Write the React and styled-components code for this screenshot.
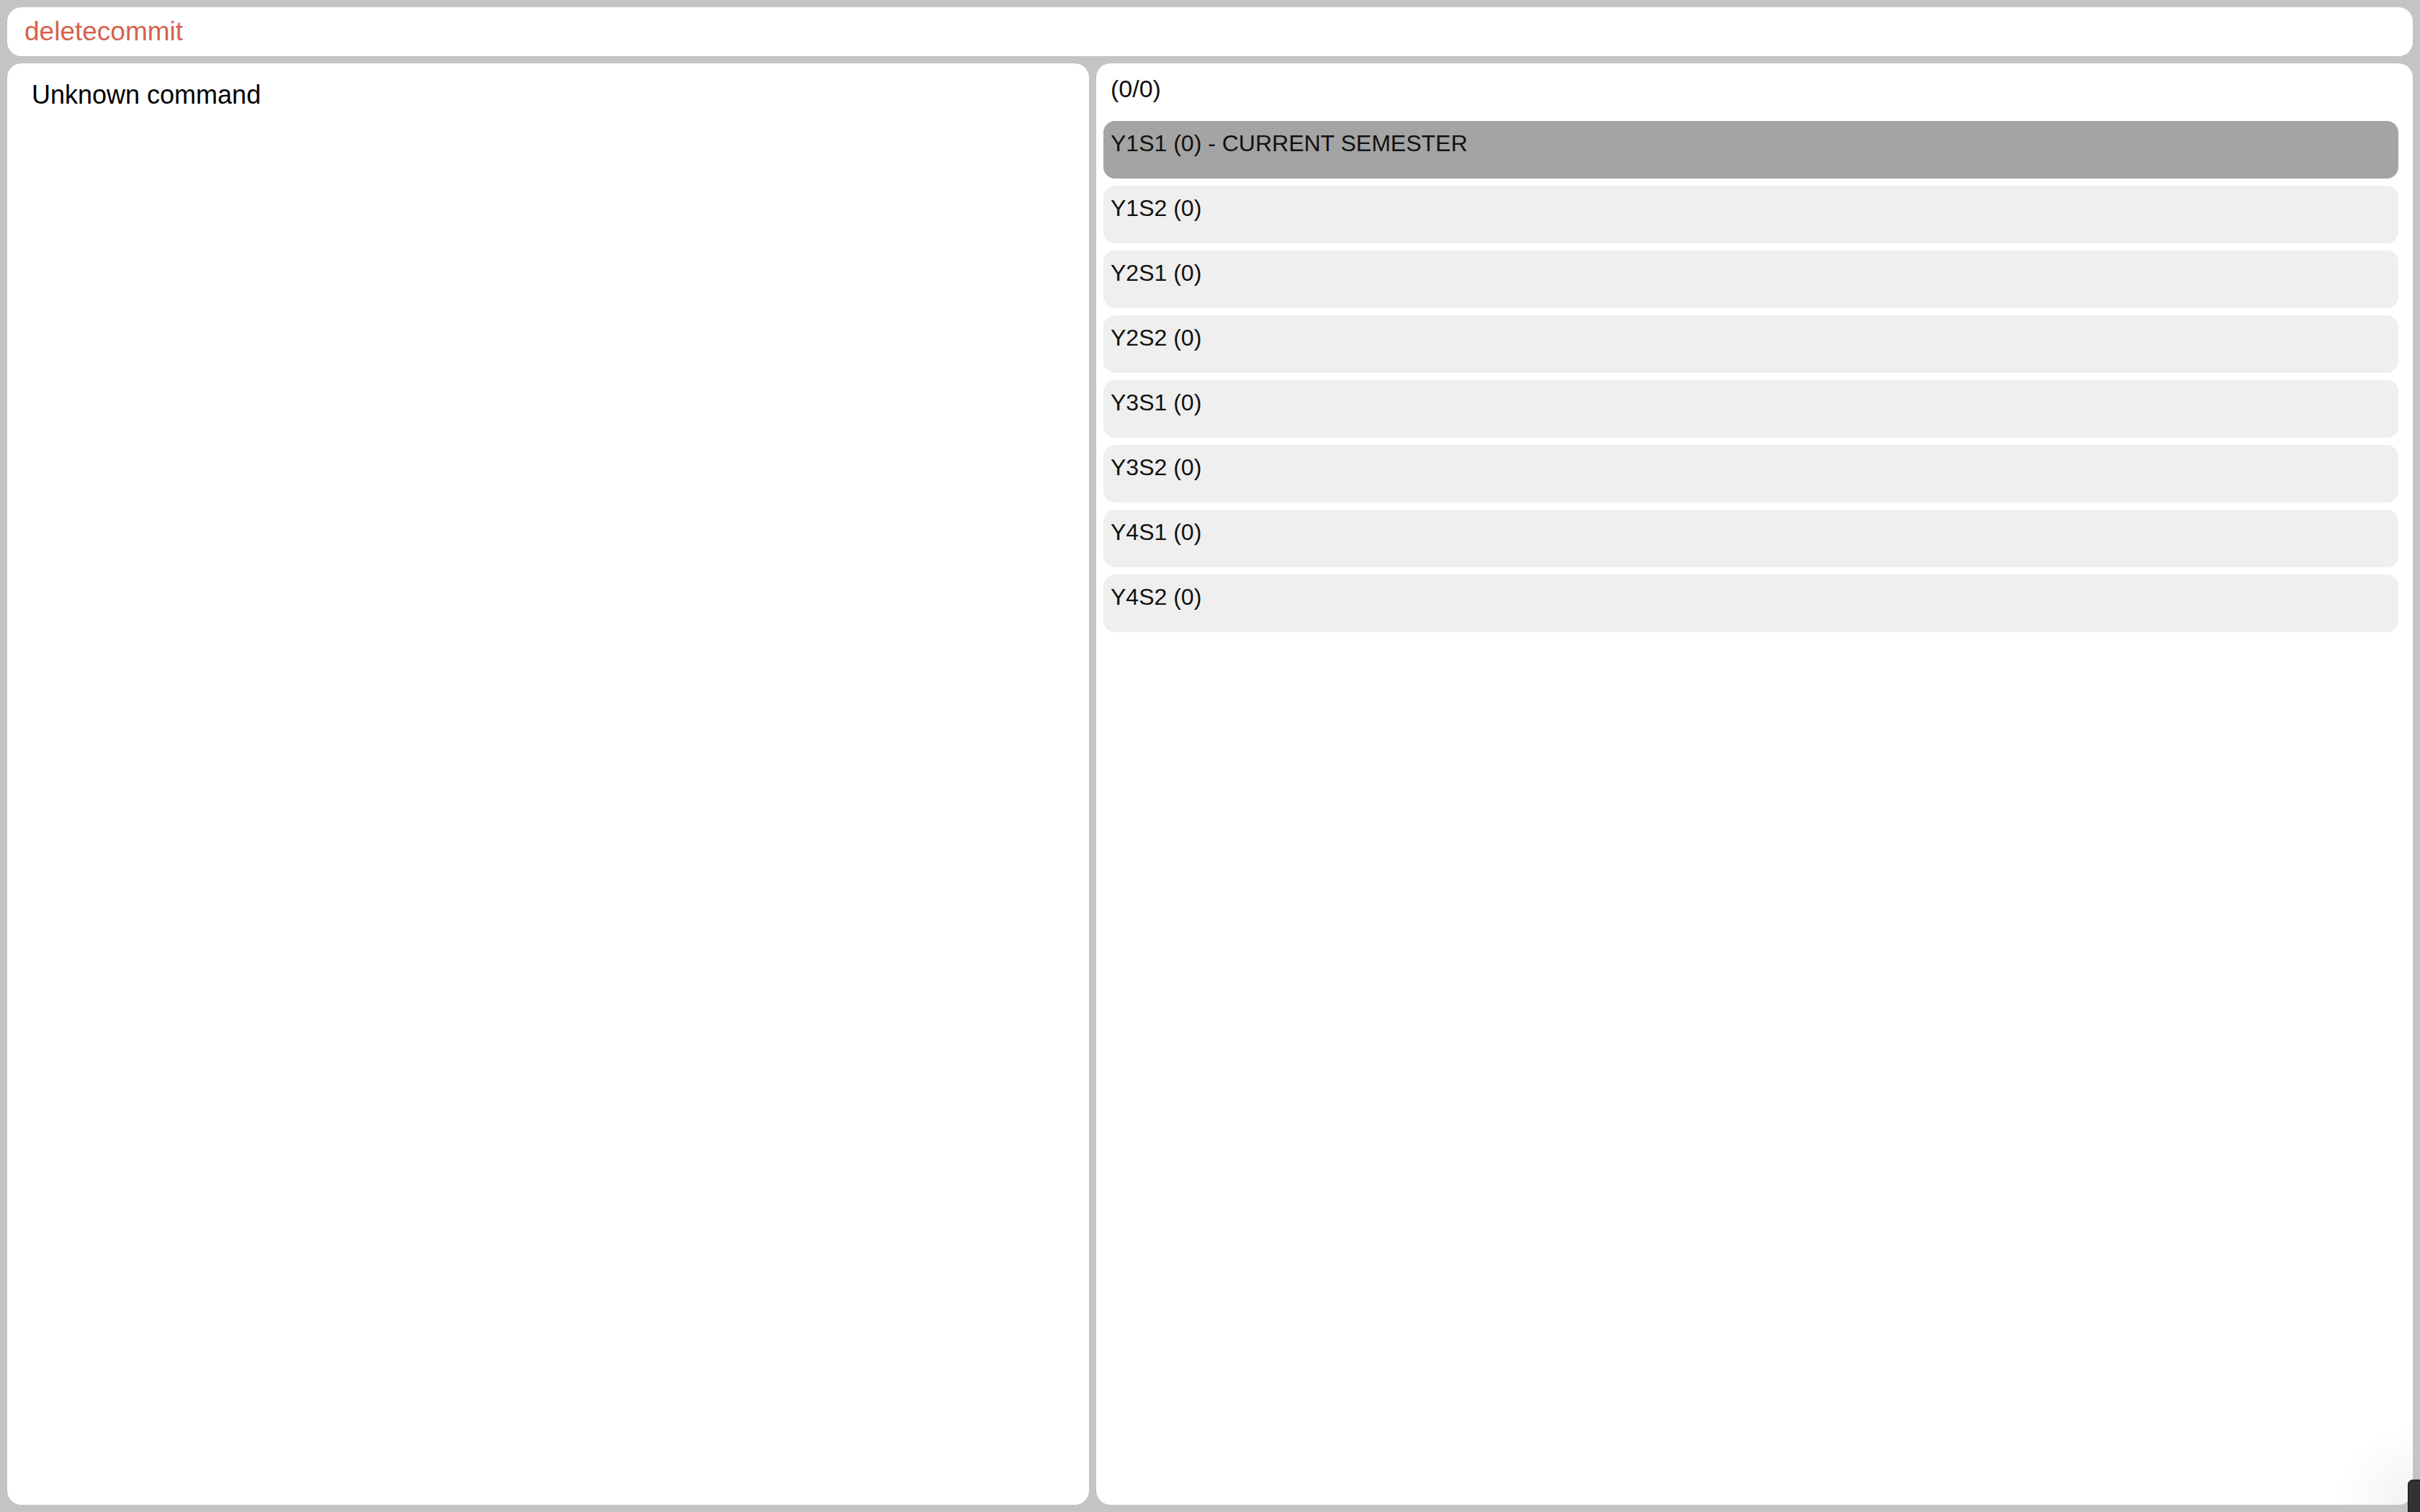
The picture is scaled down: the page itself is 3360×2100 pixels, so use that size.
import React from "react"
import styled, { createGlobalStyle } from "styled-components"

const GlobalStyle = createGlobalStyle`
  html, body {
    margin: 0;
    padding: 0;
    background: #c4c4c4;
  }
  body {
    font-family: "Liberation Sans", Arial, sans-serif;
    color: #111;
  }
`

const Screen = styled.div`
  position: relative;
  box-sizing: border-box;
  height: 100vh;
  padding: 10px;
  display: grid;
  grid-template-rows: 68px 1fr;
  gap: 10px;
  background: #c4c4c4;
  overflow: hidden;
`

const CommandBar = styled.div`
  display: flex;
  align-items: center;
  padding: 0 24px;
  background: #fff;
  border-radius: 20px;
`

const CommandText = styled.span`
  font-size: 37px;
  color: #d6614e;
`

const Panels = styled.div`
  display: grid;
  grid-template-columns: 1502px 1fr;
  gap: 10px;
  min-height: 0;
`

const Panel = styled.section`
  background: #fff;
  border-radius: 20px;
  box-sizing: border-box;
  min-height: 0;
  overflow: hidden;
`

const OutputPanel = styled(Panel)`
  padding: 23px 34px;
`

const Output = styled.div`
  font-size: 36px;
  color: #000;
`

const SemesterPanel = styled(Panel)`
  padding: 16px 20px 10px 10px;
  display: flex;
  flex-direction: column;
  background: radial-gradient(circle at 100% 100%, rgba(0, 0, 0, 0.05), rgba(0, 0, 0, 0) 110px), #fff;
`

const Counter = styled.div`
  font-size: 34px;
  padding-left: 10px;
  margin-bottom: 25px;
`

const SemesterList = styled.div`
  display: flex;
  flex-direction: column;
  gap: 10px;
`

const SemesterRow = styled.div`
  box-sizing: border-box;
  height: 80px;
  padding: 13px 10px 0;
  font-size: 32px;
  border-radius: 16px;
  background: ${props => (props.$current ? "#a4a4a4" : "#efefef")};
`

const CornerTab = styled.div`
  position: absolute;
  left: 3343px;
  top: 2055px;
  width: 30px;
  height: 60px;
  background: #333;
  border: 1px solid #111;
  border-radius: 7px;
`

const semesters = [
  { code: "Y1S1", count: 0, current: true },
  { code: "Y1S2", count: 0 },
  { code: "Y2S1", count: 0 },
  { code: "Y2S2", count: 0 },
  { code: "Y3S1", count: 0 },
  { code: "Y3S2", count: 0 },
  { code: "Y4S1", count: 0 },
  { code: "Y4S2", count: 0 },
]

export default function App() {
  return (
    <>
      <GlobalStyle />
      <Screen>
        <CommandBar>
          <CommandText>deletecommit</CommandText>
        </CommandBar>
        <Panels>
          <OutputPanel>
            <Output>Unknown command</Output>
          </OutputPanel>
          <SemesterPanel>
            <Counter>(0/0)</Counter>
            <SemesterList>
              {semesters.map(s => (
                <SemesterRow key={s.code} $current={s.current}>
                  {s.code} ({s.count}){s.current ? " - CURRENT SEMESTER" : ""}
                </SemesterRow>
              ))}
            </SemesterList>
          </SemesterPanel>
        </Panels>
        <CornerTab />
      </Screen>
    </>
  )
}
